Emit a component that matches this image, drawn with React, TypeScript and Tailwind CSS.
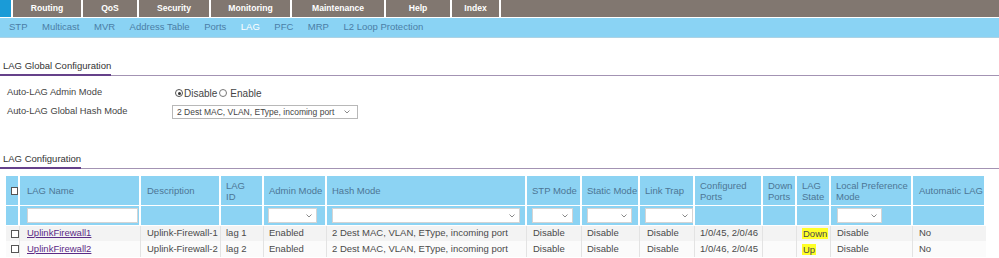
import React from "react";

const Chevron = () => (
  <svg width="6" height="4" viewBox="0 0 6 4" className="shrink-0">
    <path d="M0.5 0.5 L3 3 L5.5 0.5" fill="none" stroke="#8a8a8a" strokeWidth="1" />
  </svg>
);

const tabs: [string, string][] = [
  ["Routing", "w-[70px]"],
  ["QoS", "w-[56px]"],
  ["Security", "w-[72px]"],
  ["Monitoring", "w-[81px]"],
  ["Maintenance", "w-[94px]"],
  ["Help", "w-[66px]"],
  ["Index", "w-[49px]"],
];

const subs = ["STP", "Multicast", "MVR", "Address Table", "Ports", "LAG", "PFC", "MRP", "L2 Loop Protection"];

const cols = "grid grid-cols-[14px_121px_80px_43px_63px_200px_55px_58px_55px_68px_34px_34px_82px_73px]";

function Heading({ text }: { text: string }) {
  return (
    <div className="flex items-end">
      <span className="pl-[3px] leading-[11px] pb-[3px] border-b-2 border-[#65418a] text-[9.5px] text-[#333]">{text}</span>
      <div className="flex-1 border-b border-[#a393b3]"></div>
    </div>
  );
}

function Sel({ w }: { w: string }) {
  return (
    <div className={`${w} h-[15px] bg-white border border-[#d4d4d4] flex items-center justify-end pr-[4px]`}>
      <Chevron />
    </div>
  );
}

function Cb() {
  return <div className="w-[8px] h-[8px] border border-[#555] bg-white"></div>;
}

const hdr = "bg-[#8cd3f3] border-r-2 border-b border-white flex items-center pl-[5px] text-[#4d7695] leading-[11px]";
const flt = "bg-[#8cd3f3] border-r-2 border-b border-white flex items-center pl-[4px]";

export default function App() {
  const rows = [
    { name: "UplinkFirewall1", desc: "Uplink-Firewall-1", id: "lag 1", ports: "1/0/45, 2/0/46", state: "Down", bg: "bg-[#f3f3f3]", h: "h-[15px]" },
    { name: "UplinkFirewall2", desc: "Uplink-Firewall-2", id: "lag 2", ports: "1/0/46, 2/0/45", state: "Up", bg: "bg-[#fbfbfb]", h: "h-[16px]" },
  ];
  const dc = "border-r border-[#e3e3e3] flex items-center pl-[5px] whitespace-nowrap overflow-hidden";
  return (
    <div className="w-[999px] h-[258px] overflow-hidden bg-white font-['Liberation_Sans',Arial,sans-serif] text-[9.5px]">
      {/* top bar */}
      <div className="flex h-[17px] bg-[#817770]">
        <div className="w-[13px] bg-[#1a9bd7] border-r-2 border-white"></div>
        {tabs.map(([t, w]) => (
          <div key={t} className={`${w} border-r-2 border-white flex items-center justify-center text-white font-bold text-[8.6px]`}>
            {t}
          </div>
        ))}
        <div className="flex-1"></div>
      </div>
      <div className="h-[1px] bg-white"></div>
      <div className="h-[20px] bg-[#8ad3f4] border-b border-[#acd2e4] flex items-center pl-[9px] gap-[14.5px] text-[9.5px] text-[#4b7ea6]">
        {subs.map((s) => (
          <span key={s} className={s === "LAG" ? "text-white" : ""}>{s}</span>
        ))}
      </div>

      {/* global config */}
      <div className="mt-[22px]">
        <Heading text="LAG Global Configuration" />
      </div>
      <div className="mt-[10px] flex items-center h-[14px] text-[#444]">
        <span className="w-[175px] pl-[7px] text-[9.3px]">Auto-LAG Admin Mode</span>
        <div className="w-[8px] h-[8px] rounded-full border border-[#555] flex items-center justify-center">
          <div className="w-[3px] h-[3px] rounded-full bg-[#333]"></div>
        </div>
        <span className="ml-[1px] text-[10px]">Disable</span>
        <div className="ml-[2px] w-[8px] h-[8px] rounded-full border border-[#777]"></div>
        <span className="ml-[3px] text-[10px]">Enable</span>
      </div>
      <div className="mt-[5px] flex items-center h-[14px] text-[#444]">
        <span className="w-[172px] pl-[7px] text-[9.3px]">Auto-LAG Global Hash Mode</span>
        <div className="w-[186px] h-[14px] border border-[#b8b8b8] bg-white flex items-center justify-between pl-[4px] pr-[7px] text-[8.5px] text-[#444]">
          <span>2 Dest MAC, VLAN, EType, incoming port</span>
          <Chevron />
        </div>
      </div>

      {/* LAG configuration */}
      <div className="mt-[34px]">
        <Heading text="LAG Configuration" />
      </div>

      <div className="mt-[7px] ml-[6px] w-[980px]">
        <div className={`${cols} h-[30px]`}>
          <div className={`${hdr} pl-[3px]`}><Cb /></div>
          <div className={`${hdr} pl-[7px]`}>LAG Name</div>
          <div className={`${hdr} pl-[6px]`}>Description</div>
          <div className={`${hdr} pl-[3px]`}>LAG<br />ID</div>
          <div className={hdr}>Admin Mode</div>
          <div className={hdr}>Hash Mode</div>
          <div className={`${hdr} pl-[4px]`}>STP Mode</div>
          <div className={`${hdr} pl-[4px]`}>Static Mode</div>
          <div className={`${hdr} pl-[4px]`}>Link Trap</div>
          <div className={hdr}>Configured<br />Ports</div>
          <div className={hdr}>Down<br />Ports</div>
          <div className={hdr}>LAG<br />State</div>
          <div className={`${hdr} pl-[2px]`}>Local Preference<br />Mode</div>
          <div className={`${hdr} pl-[6px] border-r-0`}>Automatic LAG</div>
        </div>
        <div className={`${cols} h-[20px]`}>
          <div className={flt}></div>
          <div className={`${flt} pl-[7px]`}>
            <div className="w-[111px] h-[15px] bg-white border border-[#d4d4d4]"></div>
          </div>
          <div className={flt}></div>
          <div className={flt}></div>
          <div className={flt}><Sel w="w-[49px]" /></div>
          <div className={`${flt} pl-[5px]`}><Sel w="w-[188px]" /></div>
          <div className={`${flt} pl-[5px]`}><Sel w="w-[41px]" /></div>
          <div className={`${flt} pl-[5px]`}><Sel w="w-[45px]" /></div>
          <div className={`${flt} pl-[5px]`}><Sel w="w-[48px]" /></div>
          <div className={flt}></div>
          <div className={flt}></div>
          <div className={flt}></div>
          <div className={`${flt} pl-[6px]`}><Sel w="w-[45px]" /></div>
          <div className={`${flt} border-r-0`}></div>
        </div>
        {rows.map((r) => (
          <div key={r.name} className={`${cols} ${r.h} ${r.bg} text-[#4a4a4a]`}>
            <div className={`${dc} pl-[4px]`}><Cb /></div>
            <div className={`${dc} pl-[7px]`}>
              <a href="#" className="text-[#5b2a86] underline">{r.name}</a>
            </div>
            <div className={`${dc} pl-[6px]`}>{r.desc}</div>
            <div className={dc}>{r.id}</div>
            <div className={dc}>Enabled</div>
            <div className={dc}>2 Dest MAC, VLAN, EType, incoming port</div>
            <div className={`${dc} pl-[6px]`}>Disable</div>
            <div className={`${dc} pl-[5px]`}>Disable</div>
            <div className={`${dc} pl-[7px]`}>Disable</div>
            <div className={dc}>{r.ports}</div>
            <div className={dc}></div>
            <div className={`${dc} pl-[5px]`}>
              <span className="bg-[#ffff26] px-[1px] leading-[11px]">{r.state}</span>
            </div>
            <div className={`${dc} pl-[6px]`}>Disable</div>
            <div className={`${dc} pl-[6px] border-r-0`}>No</div>
          </div>
        ))}
      </div>
    </div>
  );
}
